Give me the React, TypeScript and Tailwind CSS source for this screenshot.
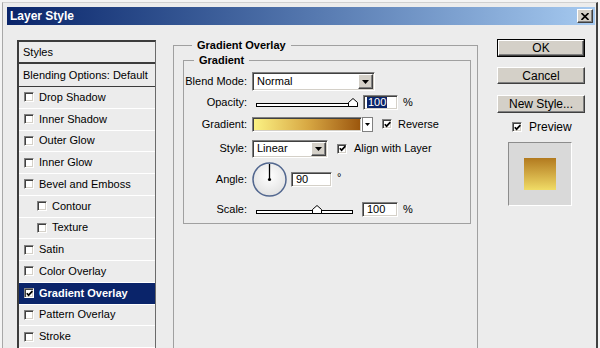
import React from "react";

const sunken =
  "border border-t-[#808080] border-l-[#808080] border-r-white border-b-white shadow-[inset_1px_1px_0_#404040,inset_-1px_-1px_0_#d4d0c8]";
const raised =
  "bg-[#d4d0c8] border border-t-white border-l-white border-r-[#404040] border-b-[#404040] shadow-[inset_-1px_-1px_0_#808080]";

function Check({ on }: { on?: boolean }) {
  return (
    <span className={`w-[10px] h-[10px] shrink-0 bg-white flex items-center justify-center ${sunken}`}>
      {on && (
        <svg width="7" height="7" viewBox="0 0 7 7">
          <path d="M0.8 3.2 L2.6 5.2 L6.4 1.2" stroke="#000" strokeWidth="1.7" fill="none" />
        </svg>
      )}
    </span>
  );
}

function Arrow() {
  return (
    <svg width="7" height="4" viewBox="0 0 7 4">
      <path d="M0 0 H7 L3.5 4 Z" fill="#000" />
    </svg>
  );
}

function Select({ value, w, h }: { value: string; w: string; h: string }) {
  return (
    <div className={`${w} ${h} bg-white flex items-stretch ${sunken} p-[1px]`}>
      <span className="flex-1 pl-[3px] flex items-center">{value}</span>
      <span className={`w-[15px] flex items-center justify-center ${raised}`}>
        <Arrow />
      </span>
    </div>
  );
}

function Thumb() {
  return (
    <svg width="10" height="9" viewBox="0 0 10 9">
      <path d="M0.5 8.5 V4.5 L5 0.5 L9.5 4.5 V8.5 Z" fill="#fff" stroke="#000" />
    </svg>
  );
}

function Slider({ w, pos }: { w: string; pos: number }) {
  return (
    <div className={`relative ${w} h-[14px] flex items-end pb-[2px] pl-[4px]`}>
      <div className="flex-1 h-[4px] bg-white border border-black" />
      <span className="absolute bottom-[2px]" style={{ left: pos - 5 }}>
        <Thumb />
      </span>
    </div>
  );
}

const layers = [
  { label: "Drop Shadow" },
  { label: "Inner Shadow" },
  { label: "Outer Glow" },
  { label: "Inner Glow" },
  { label: "Bevel and Emboss" },
  { label: "Contour", indent: true },
  { label: "Texture", indent: true },
  { label: "Satin" },
  { label: "Color Overlay" },
  { label: "Gradient Overlay", on: true, selected: true },
  { label: "Pattern Overlay" },
  { label: "Stroke" },
];

export default function App() {
  return (
    <div className="w-[600px] h-[348px] overflow-hidden bg-[#f4f4f4] pl-[2px] pt-[2px] font-['Liberation_Sans',Arial,sans-serif] text-[11px] text-black leading-none">
      <div className="w-[596px] h-[360px] bg-[#ececec] border-l border-t border-l-[#a8a8a8] border-t-[#d0d0d0] border-r-2 border-r-[#404040] pl-[4px] pr-[1px] pt-[4px]">
        {/* Title bar */}
        <div className="h-[18px] flex items-center justify-between bg-gradient-to-r from-[#0a246a] to-[#a6caf0] pl-[3px] pr-[2px]">
          <span className="text-white font-bold text-[12px]">Layer Style</span>
          <span className={`w-[16px] h-[14px] flex items-center justify-center ${raised}`}>
            <svg width="8" height="7" viewBox="0 0 8 7">
              <path d="M0.5 0 L7.5 7 M7.5 0 L0.5 7" stroke="#000" strokeWidth="1.6" />
            </svg>
          </span>
        </div>

        {/* Body */}
        <div className="flex pl-[10px] pt-[14px]">
          {/* Styles list */}
          <div className="mt-[1px] w-[139px] h-[320px] border-l-2 border-t-2 border-r border-[#3c3c3c] border-r-[#6a6a6a] flex flex-col">
            <div className="h-[22px] shrink-0 flex items-center pl-[4px] border-b-2 border-[#3c3c3c]">Styles</div>
            <div className="h-[23px] shrink-0 flex items-center pl-[4px] border-b border-[#3c3c3c]">Blending Options: Default</div>
            {layers.map((l) => (
              <div
                key={l.label}
                className={`h-[21.75px] shrink-0 flex items-center gap-[5px] border-b border-white ${
                  l.indent ? "pl-[18px]" : "pl-[5px]"
                } ${l.selected ? "bg-[#0a246a] text-white font-bold" : ""}`}
              >
                <Check on={l.on} />
                <span>{l.label}</span>
              </div>
            ))}
          </div>

          {/* Gradient Overlay group */}
          <fieldset className="ml-[17px] w-[305px] h-[330px] border border-[#a0a0a0] pl-[9px] pr-[6px] pt-[2px]">
            <legend className="ml-[9px] px-[5px] font-bold leading-[13px]">Gradient Overlay</legend>
            <fieldset className="border border-[#a0a0a0] pb-[2px]">
              <legend className="ml-[10px] px-[5px] font-bold leading-[13px]">Gradient</legend>

              <div className="mt-[5px] h-[19px] flex items-center">
                <span className="w-[63px] text-right">Blend Mode:</span>
                <div className="ml-[5px]">
                  <Select value="Normal" w="w-[123px]" h="h-[19px]" />
                </div>
              </div>

              <div className="h-[22px] flex items-center">
                <span className="w-[63px] text-right">Opacity:</span>
                <div className="ml-[5px]">
                  <Slider w="w-[106px]" pos={101} />
                </div>
                <div className={`ml-[5px] w-[35px] h-[15px] bg-white flex items-center pl-[3px] ${sunken}`}>
                  <span className="bg-[#0a246a] text-white px-[1px] leading-[11px]">100</span>
                </div>
                <span className="ml-[5px]">%</span>
              </div>

              <div className="h-[22px] flex items-center">
                <span className="w-[63px] text-right">Gradient:</span>
                <div className={`ml-[5px] w-[110px] h-[15px] ${sunken} p-[1px]`}>
                  <div className="w-full h-full bg-gradient-to-r from-[#fbf283] via-[#d8a944] to-[#9c570c]" />
                </div>
                <span className="w-[11px] h-[15px] bg-white border border-[#808080] flex items-center justify-center">
                  <svg width="5" height="3" viewBox="0 0 5 3">
                    <path d="M0 0 H5 L2.5 3 Z" fill="#000" />
                  </svg>
                </span>
                <span className="ml-[9px]">
                  <Check on />
                </span>
                <span className="ml-[6px]">Reverse</span>
              </div>

              <div className="h-[27px] flex items-center">
                <span className="w-[63px] text-right">Style:</span>
                <div className="ml-[5px]">
                  <Select value="Linear" w="w-[76px]" h="h-[18px]" />
                </div>
                <span className="ml-[9px]">
                  <Check on />
                </span>
                <span className="ml-[7px]">Align with Layer</span>
              </div>

              <div className="h-[35px] flex items-center">
                <span className="w-[63px] text-right">Angle:</span>
                <svg className="ml-[5px]" width="35" height="35" viewBox="0 0 35 35">
                  <defs>
                    <radialGradient id="dial" cx="50%" cy="40%" r="60%">
                      <stop offset="0%" stopColor="#ffffff" />
                      <stop offset="100%" stopColor="#e2e2e2" />
                    </radialGradient>
                  </defs>
                  <circle cx="17.5" cy="17.5" r="16.5" fill="url(#dial)" stroke="#52678f" strokeWidth="1.5" />
                  <path d="M17.5 17.5 V2" stroke="#000" strokeWidth="1.3" />
                  <circle cx="17.5" cy="17.5" r="1.6" fill="#000" />
                </svg>
                <div className={`ml-[4px] w-[41px] h-[15px] bg-white flex items-center pl-[4px] ${sunken}`}>90</div>
                <span className="ml-[5px] self-start mt-[10px]">°</span>
              </div>

              <div className="h-[24px] flex items-center">
                <span className="w-[63px] text-right">Scale:</span>
                <div className="ml-[5px]">
                  <Slider w="w-[101px]" pos={65} />
                </div>
                <div className={`ml-[9px] w-[36px] h-[15px] bg-white flex items-center pl-[4px] ${sunken}`}>100</div>
                <span className="ml-[5px]">%</span>
              </div>
            </fieldset>
          </fieldset>

          {/* Buttons */}
          <div className="ml-[19px] w-[88px] flex flex-col text-[12px]">
            <div className="h-[18px] border border-black flex">
              <div className={`flex-1 flex items-center justify-center ${raised}`}>OK</div>
            </div>
            <div className={`mt-[10px] h-[17px] flex items-center justify-center ${raised}`}>Cancel</div>
            <div className={`mt-[11px] h-[18px] flex items-center justify-center ${raised}`}>New Style...</div>
            <div className="mt-[9px] h-[10px] flex items-center pl-[15px] gap-[7px]">
              <Check on />
              <span>Preview</span>
            </div>
            <div className="mt-[10px] ml-[11px] w-[64px] h-[64px] bg-[#d9d9d9] border border-t-[#8c8c8c] border-l-[#8c8c8c] border-r-white border-b-white flex items-center justify-center">
              <div className="w-[32px] h-[32px] bg-gradient-to-b from-[#b27a1e] to-[#f0dc66]" />
            </div>
          </div>
        </div>
      </div>
    </div>
  );
}
